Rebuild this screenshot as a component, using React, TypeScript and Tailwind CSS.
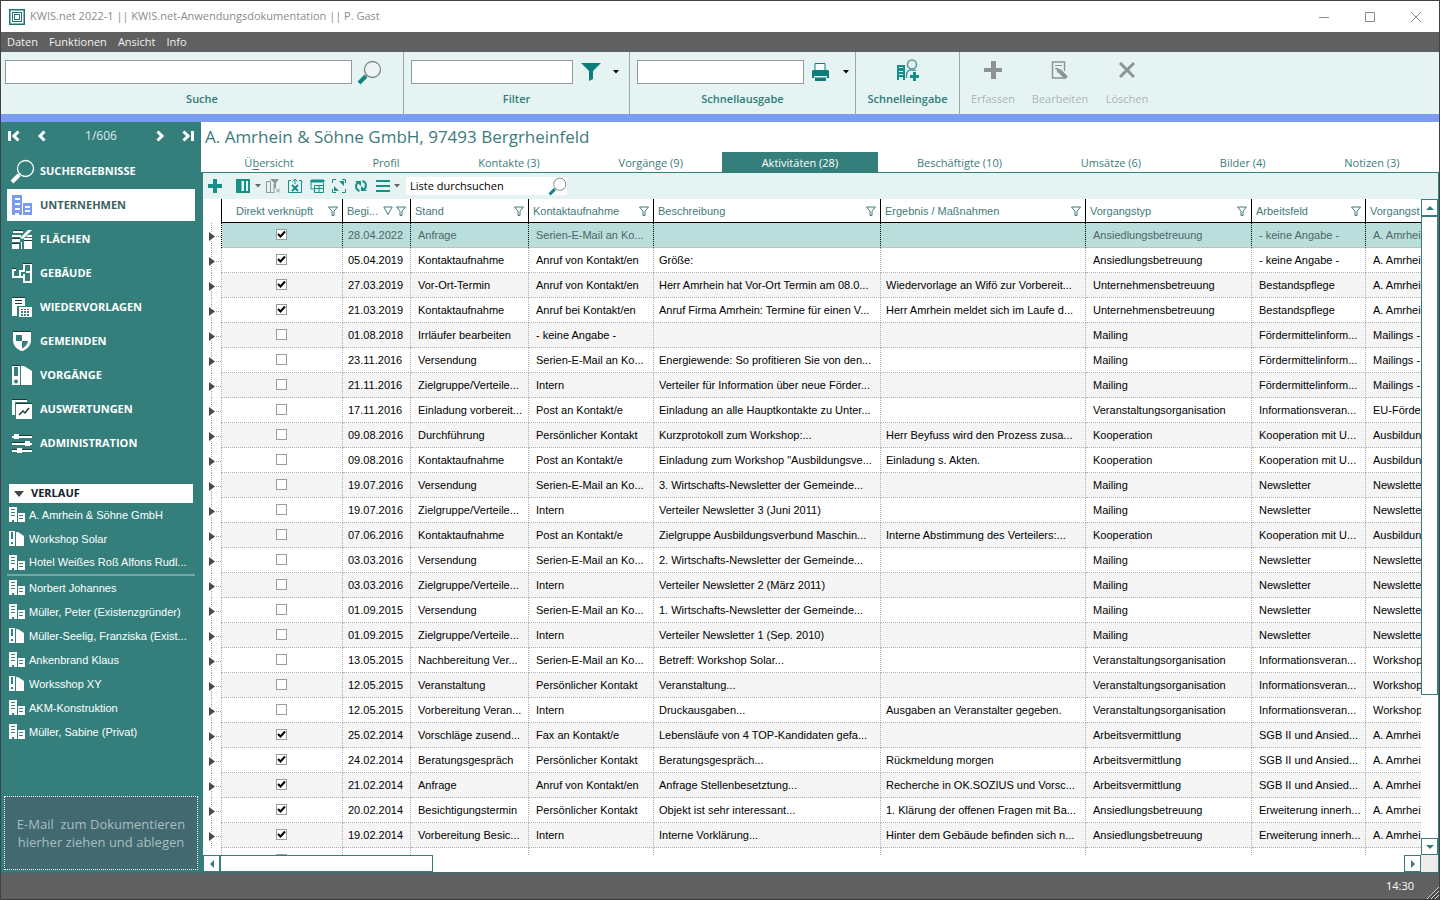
import type { ReactNode } from 'react';

// ==========================================
// DATA
// ==========================================

interface Activity {
  linked: boolean;
  date: string;
  status: string;
  contact: string;
  description: string;
  result: string;
  type: string;
  field: string;
  title: string;
}

const row = (
  linked: boolean,
  date: string,
  status: string,
  contact: string,
  description: string,
  result: string,
  type: string,
  field: string,
  title: string,
): Activity => ({ linked, date, status, contact, description, result, type, field, title });

const ACTIVITIES: Activity[] = [
  row(true, '28.04.2022', 'Anfrage', 'Serien-E-Mail an Ko...', '', '', 'Ansiedlungsbetreuung', '- keine Angabe -', 'A. Amrhei'),
  row(true, '05.04.2019', 'Kontaktaufnahme', 'Anruf von Kontakt/en', 'Größe:', '', 'Ansiedlungsbetreuung', '- keine Angabe -', 'A. Amrhei'),
  row(true, '27.03.2019', 'Vor-Ort-Termin', 'Anruf von Kontakt/en', 'Herr Amrhein hat Vor-Ort Termin am 08.0...', 'Wiedervorlage an Wifö zur Vorbereit...', 'Unternehmensbetreuung', 'Bestandspflege', 'A. Amrhei'),
  row(true, '21.03.2019', 'Kontaktaufnahme', 'Anruf bei Kontakt/en', 'Anruf Firma Amrhein: Termine für einen V...', 'Herr Amrhein meldet sich im Laufe d...', 'Unternehmensbetreuung', 'Bestandspflege', 'A. Amrhei'),
  row(false, '01.08.2018', 'Irrläufer bearbeiten', '- keine Angabe -', '', '', 'Mailing', 'Fördermittelinform...', 'Mailings -'),
  row(false, '23.11.2016', 'Versendung', 'Serien-E-Mail an Ko...', 'Energiewende: So profitieren Sie von den...', '', 'Mailing', 'Fördermittelinform...', 'Mailings -'),
  row(false, '21.11.2016', 'Zielgruppe/Verteile...', 'Intern', 'Verteiler für Information über neue Förder...', '', 'Mailing', 'Fördermittelinform...', 'Mailings -'),
  row(false, '17.11.2016', 'Einladung vorbereit...', 'Post an Kontakt/e', 'Einladung an alle Hauptkontakte zu Unter...', '', 'Veranstaltungsorganisation', 'Informationsveran...', 'EU-Förde'),
  row(false, '09.08.2016', 'Durchführung', 'Persönlicher Kontakt', 'Kurzprotokoll zum Workshop:...', 'Herr Beyfuss wird den Prozess zusa...', 'Kooperation', 'Kooperation mit U...', 'Ausbildun'),
  row(false, '09.08.2016', 'Kontaktaufnahme', 'Post an Kontakt/e', 'Einladung zum Workshop "Ausbildungsve...', 'Einladung s. Akten.', 'Kooperation', 'Kooperation mit U...', 'Ausbildun'),
  row(false, '19.07.2016', 'Versendung', 'Serien-E-Mail an Ko...', '3. Wirtschafts-Newsletter der Gemeinde...', '', 'Mailing', 'Newsletter', 'Newsletter'),
  row(false, '19.07.2016', 'Zielgruppe/Verteile...', 'Intern', 'Verteiler Newsletter 3 (Juni 2011)', '', 'Mailing', 'Newsletter', 'Newsletter'),
  row(false, '07.06.2016', 'Kontaktaufnahme', 'Post an Kontakt/e', 'Zielgruppe Ausbildungsverbund Maschin...', 'Interne Abstimmung des Verteilers:...', 'Kooperation', 'Kooperation mit U...', 'Ausbildun'),
  row(false, '03.03.2016', 'Versendung', 'Serien-E-Mail an Ko...', '2. Wirtschafts-Newsletter der Gemeinde...', '', 'Mailing', 'Newsletter', 'Newsletter'),
  row(false, '03.03.2016', 'Zielgruppe/Verteile...', 'Intern', 'Verteiler Newsletter 2 (März 2011)', '', 'Mailing', 'Newsletter', 'Newsletter'),
  row(false, '01.09.2015', 'Versendung', 'Serien-E-Mail an Ko...', '1. Wirtschafts-Newsletter der Gemeinde...', '', 'Mailing', 'Newsletter', 'Newsletter'),
  row(false, '01.09.2015', 'Zielgruppe/Verteile...', 'Intern', 'Verteiler Newsletter 1 (Sep. 2010)', '', 'Mailing', 'Newsletter', 'Newsletter'),
  row(false, '13.05.2015', 'Nachbereitung Ver...', 'Serien-E-Mail an Ko...', 'Betreff: Workshop Solar...', '', 'Veranstaltungsorganisation', 'Informationsveran...', 'Workshop'),
  row(false, '12.05.2015', 'Veranstaltung', 'Persönlicher Kontakt', 'Veranstaltung...', '', 'Veranstaltungsorganisation', 'Informationsveran...', 'Workshop'),
  row(false, '12.05.2015', 'Vorbereitung Veran...', 'Intern', 'Druckausgaben...', 'Ausgaben an Veranstalter gegeben.', 'Veranstaltungsorganisation', 'Informationsveran...', 'Workshop'),
  row(true, '25.02.2014', 'Vorschläge zusend...', 'Fax an Kontakt/e', 'Lebensläufe von 4 TOP-Kandidaten gefa...', '', 'Arbeitsvermittlung', 'SGB II und Ansied...', 'A. Amrhei'),
  row(true, '24.02.2014', 'Beratungsgespräch', 'Persönlicher Kontakt', 'Beratungsgespräch...', 'Rückmeldung morgen', 'Arbeitsvermittlung', 'SGB II und Ansied...', 'A. Amrhei'),
  row(true, '21.02.2014', 'Anfrage', 'Anruf von Kontakt/en', 'Anfrage Stellenbesetztung...', 'Recherche in OK.SOZIUS und Vorsc...', 'Arbeitsvermittlung', 'SGB II und Ansied...', 'A. Amrhei'),
  row(true, '20.02.2014', 'Besichtigungstermin', 'Persönlicher Kontakt', 'Objekt ist sehr interessant...', '1. Klärung der offenen Fragen mit Ba...', 'Ansiedlungsbetreuung', 'Erweiterung innerh...', 'A. Amrhei'),
  row(true, '19.02.2014', 'Vorbereitung Besic...', 'Intern', 'Interne Vorklärung...', 'Hinter dem Gebäude befinden sich n...', 'Ansiedlungsbetreuung', 'Erweiterung innerh...', 'A. Amrhei'),
  row(false, '', '', '', '', '', '', '', ''),
];

const COLUMNS = [
  { label: 'Stand', width: 'w-[118px]' },
  { label: 'Kontaktaufnahme', width: 'w-[125px]' },
  { label: 'Beschreibung', width: 'w-[227px]' },
  { label: 'Ergebnis / Maßnahmen', width: 'w-[205px]' },
  { label: 'Vorgangstyp', width: 'w-[166px]' },
  { label: 'Arbeitsfeld', width: 'w-[114px]' },
];

const TABS = [
  'Übersicht',
  'Profil',
  'Kontakte (3)',
  'Vorgänge (9)',
  'Aktivitäten (28)',
  'Beschäftigte (10)',
  'Umsätze (6)',
  'Bilder (4)',
  'Notizen (3)',
];

const UI = "font-['Open_Sans','Noto_Sans',sans-serif]";
const GRID = "font-['Liberation_Sans',Arial,sans-serif]";

// ==========================================
// ICONS
// ==========================================

function Magnifier({ size = 25, handle = '#0f8580', ring = '#7d8588', fill = '#eef3f8' }) {
  return (
    <svg width={size} height={size} viewBox="0 0 25 25" fill="none" aria-hidden="true">
      <path d="M2 23l7-7" stroke={handle} strokeWidth="4" />
      <path d="M8 17l2.500-2.500" stroke={ring} strokeWidth="1.500" />
      <circle cx="15.500" cy="9.500" r="8" fill={fill} stroke={ring} strokeWidth="1.300" />
    </svg>
  );
}

function Icon({ size = 20, children }: { size?: number; children: ReactNode }) {
  return (
    <svg width={size} height={size} viewBox="0 0 20 20" fill="currentColor" className="shrink-0" aria-hidden="true">
      {children}
    </svg>
  );
}

function CompanyIcon() {
  return (
    <Icon>
      <path
        fillRule="evenodd"
        d="M0 0h10v20H7v-2H3v2H0zM3 3v2h5V3zM3 8v2h5V8zM3 13v2h5v-2zM11 8h9v12h-9zM13 11v2h5v-2zM13 15v2h5v-2z"
      />
    </Icon>
  );
}

function BinderIcon() {
  return (
    <Icon>
      <path fillRule="evenodd" d="M0 0h8v20H0zM2 2v9h4V2zM4 14.500a2 2 0 100 4 2 2 0 000-4z" />
      <path d="M9 1l3 0 8 5v14H9z" />
      <path d="M0 0h8v1H0z" fill="#1d3a3a" />
    </Icon>
  );
}

// 16px variants for the history list, drawn on the pixel grid
function SmallCompanyIcon() {
  return (
    <svg width="16" height="16" viewBox="0 0 16 16" fill="#fff" className="shrink-0" aria-hidden="true">
      <path
        fillRule="evenodd"
        d="M0 0h8v15H5v-2H3v2H0zM2 2v1h4V2zM2 5v1h4V5zM2 8v1h4V8zM9 6h7v9H9zM10 8v1h4V8zM10 11v1h4v-1z"
      />
    </svg>
  );
}

function SmallBinderIcon() {
  return (
    <svg width="16" height="16" viewBox="0 0 16 16" fill="#fff" className="shrink-0" aria-hidden="true">
      <path fillRule="evenodd" d="M0 0h6v15H0zM2 1v7h2V1zM2 11v2h2v-2z" />
      <path d="M7 1h2l6 4v10H7z" />
    </svg>
  );
}

const NAV: { label: string; icon: ReactNode; active?: boolean }[] = [
  { label: 'SUCHERGEBNISSE', icon: <Magnifier handle="#fff" ring="#fff" fill="none" /> },
  { label: 'UNTERNEHMEN', icon: <CompanyIcon />, active: true },
  {
    label: 'FLÄCHEN',
    icon: (
      <Icon>
        <path d="M1 2h10v2H1zM0 6h9v2H0zM0 10h8v3H0zM0 15h7v5H0zM9 13h1v7H9zM12 12h8v8h-8zM12 9h8v2h-8zM8 9l8-8h4l-9 9zM16 6h4v2h-6z" />
        <path d="M1 1h10v1H1zM0 9h8v1H0zM0 14h7v1H0zM12 11h8v1h-8z" fill="#1d3a3a" />
      </Icon>
    ),
  },
  {
    label: 'GEBÄUDE',
    icon: (
      <Icon>
        <path d="M4 7H1v7h11v5h7V1h-7v7H8M8 7v7M12 14v-3M14 9h5" fill="none" stroke="currentColor" strokeWidth="2" />
        <path d="M11 0h9v1h-9zM0 5h4v1H0z" fill="#1d3a3a" />
      </Icon>
    ),
  },
  {
    label: 'WIEDERVORLAGEN',
    icon: (
      <Icon>
        <path fillRule="evenodd" d="M0 0h13v9H5v10H0zM3 3v1h7V3zM3 6v1h7V6z" />
        <path
          fillRule="evenodd"
          d="M7 10h13v10H7zM9 12v1h2v-1zm3 0v1h2v-1zm3 0v1h2v-1zM9 14v2h2v-2zm3 0v2h2v-2zm3 0v2h2v-2zM9 17v2h2v-2zm3 0v2h2v-2zm3 0v2h2v-2z"
        />
        <path d="M0 0h13v1H0zM3 3h7v1H3zM3 6h7v1H3z" fill="#1d3a3a" />
      </Icon>
    ),
  },
  {
    label: 'GEMEINDEN',
    icon: (
      <Icon>
        <path fillRule="evenodd" d="M1 1h18v8c0 6-4 9-9 11.500C5 18 1 15 1 9zM4 4v6h6V4zM10 10v7.500c3-1.500 5.500-4 6-7.500z" />
        <path d="M1 0h18v1H1z" fill="#1d3a3a" />
      </Icon>
    ),
  },
  { label: 'VORGÄNGE', icon: <BinderIcon /> },
  {
    label: 'AUSWERTUNGEN',
    icon: (
      <Icon>
        <path d="M0 0h15v3H3v13H0z" />
        <path d="M4 5h16v15H4z" />
        <path d="M0 0h15v1H0zM4 4h16v1H4z" fill="#1d3a3a" />
        <path d="M7 16l4-4 2 2 4-5" fill="none" stroke="#1d3a3a" strokeWidth="1.500" />
      </Icon>
    ),
  },
  {
    label: 'ADMINISTRATION',
    icon: (
      <Icon>
        <path d="M0 3h20v2H0zM0 10h20v2H0zM0 17h20v2H0z" />
        <path d="M2 1h5v5H2zM13 8h5v5h-5zM5 15h5v5H5z" />
        <path d="M7 2h13v1H7zM0 9h13v1H0zM0 16h5v1H0zM10 16h10v1H10z" fill="#1d3a3a" />
      </Icon>
    ),
  },
];

const HISTORY: { label: string; binder?: boolean }[] = [
  { label: 'A. Amrhein & Söhne GmbH' },
  { label: 'Workshop Solar', binder: true },
  { label: 'Hotel Weißes Roß Alfons Rudl...' },
  { label: 'Norbert Johannes' },
  { label: 'Müller, Peter (Existenzgründer)' },
  { label: 'Müller-Seelig, Franziska (Exist...', binder: true },
  { label: 'Ankenbrand Klaus' },
  { label: 'Worksshop XY', binder: true },
  { label: 'AKM-Konstruktion' },
  { label: 'Müller, Sabine (Privat)' },
];

function Caret() {
  return (
    <svg width="6" height="4" viewBox="0 0 6 4" aria-hidden="true">
      <path d="M0 0h6L3 3.500z" fill="currentColor" />
    </svg>
  );
}

function FilterGlyph() {
  return (
    <svg width="10" height="10" viewBox="0 0 10 10" fill="none" stroke="#3f7b7b" className="shrink-0" aria-hidden="true">
      <path d="M.5 1h9L6 5.200V9.500H4V5.200z" />
    </svg>
  );
}

// ==========================================
// HEADER BARS
// ==========================================

function TitleBar() {
  return (
    <header className="flex h-[31px] shrink-0 items-center bg-white pl-2 pr-[17px] text-[11px] text-[#8b8b8b]">
      <svg width="16" height="16" viewBox="0 0 16 16" fill="none" stroke="#1f7370" aria-hidden="true">
        <rect x=".75" y=".75" width="14.500" height="14.500" strokeWidth="1.500" />
        <rect x="3.500" y="3.500" width="9" height="9" />
        <rect x="5.500" y="5.500" width="5" height="5" />
      </svg>
      <h1 className="ml-[5px] whitespace-nowrap">
        KWIS.net 2022-1 || KWIS.net-Anwendungsdokumentation || P. Gast
      </h1>
      <div className="ml-auto flex items-center gap-[34px]">
        <button type="button" aria-label="Minimieren">
          <svg width="12" height="12" viewBox="0 0 12 12" stroke="#8c8c8c"><path d="M1 6.500h10" /></svg>
        </button>
        <button type="button" aria-label="Maximieren">
          <svg width="12" height="12" viewBox="0 0 12 12" fill="none" stroke="#8c8c8c"><path d="M1.500 1.500h9v9h-9z" /></svg>
        </button>
        <button type="button" aria-label="Schließen">
          <svg width="12" height="12" viewBox="0 0 12 12" stroke="#8c8c8c"><path d="M1 1l10 10M11 1L1 11" /></svg>
        </button>
      </div>
    </header>
  );
}

function SearchGroup({
  id,
  label,
  width,
  pad,
  children,
}: {
  id: string;
  label: string;
  width: string;
  pad: string;
  children: ReactNode;
}) {
  return (
    <div className={`flex flex-col border-r border-[#9aa8a8] pt-2 ${width}`}>
      <div className={`flex h-6 items-center ${pad}`}>
        <input id={id} className="h-6 min-w-0 flex-1 border border-[#8f9a9a] bg-white px-1 text-[#222] outline-none" />
        {children}
      </div>
      <label htmlFor={id} className="mt-[7px] text-center leading-4">{label}</label>
    </div>
  );
}

function Ribbon() {
  return (
    <div className="flex h-[62px] shrink-0 bg-[#e5f4f3] text-[11px] font-semibold text-[#2f7c79]">
      <SearchGroup id="suche" label="Suche" width="w-[403px]" pad="pl-1 pr-[21px]">
        <button type="button" aria-label="Suchen" className="ml-[5px]"><Magnifier /></button>
      </SearchGroup>
      <SearchGroup id="filter" label="Filter" width="w-[226px]" pad="pl-[7px] pr-[10px]">
        <button type="button" aria-label="Filtern" className="ml-2">
          <svg width="20" height="20" viewBox="0 0 20 20" fill="#0d7f7b"><path d="M0 1h20l-8 8v8l-4 2V9z" /></svg>
        </button>
        <button type="button" aria-label="Filter wählen" className="ml-[12px] text-black"><Caret /></button>
      </SearchGroup>
      <SearchGroup id="ausgabe" label="Schnellausgabe" width="w-[226px]" pad="pl-[7px] pr-[6px]">
        <button type="button" aria-label="Drucken" className="ml-[7px]">
          <svg width="19" height="20" viewBox="0 0 19 20" fill="#0d7f7b">
            <path d="M4 1.500h10V9H4z" fill="#f4fbfa" stroke="#0d7f7b" />
            <path d="M2 8h15l1 1v7h-3v-2H4v2H1V9zM4 15h11v4H4z" />
            <path d="M3 14h13v1.500H3z" fill="#e5f4f3" />
          </svg>
        </button>
        <button type="button" aria-label="Ausgabe wählen" className="ml-[13px] text-black"><Caret /></button>
      </SearchGroup>
      <button type="button" className="flex w-[104px] flex-col items-center border-r border-[#9aa8a8] pt-[7px]">
        <svg width="22" height="22" viewBox="0 0 22 22" fill="#14908a" aria-hidden="true">
          <path fillRule="evenodd" d="M0 6h8v15H6v-3H2v3H0zM2 8v1h4V8zm0 4v1h4v-1zM2 15v1h4v-1z" />
          <path d="M9.500 19v-3c0-3 2-5 5.500-5s5 1.500 5.500 4" fill="none" stroke="#4b9c98" strokeWidth="1.500" />
          <circle cx="15" cy="5.500" r="4.500" fill="none" stroke="#4b9c98" strokeWidth="1.500" />
          <path d="M12 12h10v10H12z" fill="#e5f4f3" />
          <path d="M16 13h3v3h3v3h-3v3h-3v-3h-3v-3h3z" />
        </svg>
        <span className="mt-[10px] leading-4">Schnelleingabe</span>
      </button>
      <div className="flex pl-1 font-normal text-[#aab5b5]">
        <button type="button" disabled className="flex w-[58px] flex-col items-center pt-[9px]">
          <svg width="18" height="18" viewBox="0 0 18 18" fill="#8e9393"><path d="M7 0h5v7h6v4h-6v7H7v-7H0V7h7z" /></svg>
          <span className="mt-3 leading-4">Erfassen</span>
        </button>
        <button type="button" disabled className="flex w-[76px] flex-col items-center pt-[9px]">
          <svg width="18" height="18" viewBox="0 0 18 18" fill="none" stroke="#8e9393">
            <path d="M13.500 10V1h-12v16h12" strokeWidth="1.500" />
            <path d="M4 4.500h7M4 7.500h3" />
            <path d="M8.500 10l7 7" strokeWidth="4" />
            <path d="M5 7l5 1.500L6.500 12z" fill="#8e9393" stroke="none" />
          </svg>
          <span className="mt-3 leading-4">Bearbeiten</span>
        </button>
        <button type="button" disabled className="flex w-[58px] flex-col items-center pt-[10px]">
          <svg width="16" height="16" viewBox="0 0 16 16" stroke="#8e9393" strokeWidth="3"><path d="M1 1l14 14M15 1L1 15" /></svg>
          <span className="mt-[13px] leading-4">Löschen</span>
        </button>
      </div>
    </div>
  );
}

// ==========================================
// SIDEBAR
// ==========================================

function Chevron({ d, label }: { d: string; label: string }) {
  return (
    <button type="button" aria-label={label}>
      <svg width="12" height="12" viewBox="0 0 12 12" fill="none" stroke="#fff" strokeWidth="3"><path d={d} /></svg>
    </button>
  );
}

function Sidebar() {
  return (
    <aside className="flex w-[200px] shrink-0 flex-col bg-[#347f7c] text-white">
      <div className="flex h-7 items-center justify-between px-[7px] text-[12px] text-[#d9ecea]">
        <div className="flex gap-4">
          <Chevron label="Erster" d="M1.500 1v10M10.500 1.500L6 6l4.500 4.500" />
          <Chevron label="Zurück" d="M8.500 1.500L4 6l4.500 4.500" />
        </div>
        <span>1/606</span>
        <div className="flex gap-4">
          <Chevron label="Weiter" d="M3.500 1.500L8 6l-4.500 4.500" />
          <Chevron label="Letzter" d="M10.500 1v10M1.500 1.500L6 6l-4.500 4.500" />
        </div>
      </div>

      <nav className="mt-[5px] flex flex-col gap-[2px] px-[6px]">
        {NAV.map((n) => (
          <a
            key={n.label}
            href="#"
            className={`flex h-8 items-center text-[11px] font-bold ${n.active ? 'bg-white text-[#3d6264]' : 'text-white'}`}
          >
            <span className={`flex w-[33px] justify-start pl-[5px] ${n.active ? 'text-[#7b9bf0]' : ''}`}>
              {n.label === 'SUCHERGEBNISSE' ? <span className="-ml-[2px]">{n.icon}</span> : n.icon}
            </span>
            {n.label}
          </a>
        ))}
      </nav>

      <button
        type="button"
        className="mx-2 mt-[25px] flex h-[19px] shrink-0 items-center gap-[7px] bg-white pl-[5px] text-[11px] font-bold text-[#0f2030]"
      >
        <svg width="10" height="6" viewBox="0 0 10 6" fill="#444"><path d="M0 0h10L5 6z" /></svg>
        VERLAUF
      </button>
      <ul className={`text-[11px] ${GRID}`}>
        {HISTORY.map((h, i) => (
          <li key={h.label} className={i === 2 ? 'mx-[6px] h-[25px] border-b-2 border-[#74a9a7] px-[2px]' : 'h-6 px-2'}>
            <a href="#" className="flex h-full items-center gap-1 whitespace-nowrap">
              {h.binder ? <SmallBinderIcon /> : <SmallCompanyIcon />}
              {h.label}
            </a>
          </li>
        ))}
      </ul>

      <div className="mx-[3px] mb-[2px] mt-auto flex h-[74px] flex-col items-center justify-center border border-dotted border-white bg-[#42696f] text-[13px] leading-[18px] text-[#a9bfc1]">
        <p className="whitespace-pre">E-Mail  zum Dokumentieren</p>
        <p>hierher ziehen und ablegen</p>
      </div>
    </aside>
  );
}

// ==========================================
// ACTIVITY LIST
// ==========================================

function ToolButton({ label, children }: { label: string; children: ReactNode }) {
  return (
    <button type="button" aria-label={label} className="flex w-[22px] justify-center">
      <svg width="16" height="16" viewBox="0 0 16 16" fill="none" stroke="#179088" aria-hidden="true">
        {children}
      </svg>
    </button>
  );
}

function ListToolbar() {
  return (
    <div className="flex h-[26px] shrink-0 items-center bg-[#e5f4f3] pl-[1px] text-[11px] text-[#666]">
      <ToolButton label="Neu"><path d="M8 1v14M1 8h14" strokeWidth="4" /></ToolButton>
      <span className="w-[6px]" />
      <ToolButton label="Spalten">
        <path d="M2 2h12v12H2z" strokeWidth="2" />
        <path d="M2 2h4v12H2z" fill="#179088" />
        <path d="M10 2v12" strokeWidth="2" />
      </ToolButton>
      <button type="button" aria-label="Spalten wählen" className="flex w-[8px] justify-center"><Caret /></button>
      <ToolButton label="Filter löschen">
        <g stroke="#8e9a9a">
          <path d="M1.500 3.500h4v11h-4zM6 14.500h3V6" />
          <path d="M5 1h9L11 5v5H9V5z" fill="#8e9a9a" stroke="none" />
          <path d="M11 10.500l4 4M15 10.500l-4 4" />
        </g>
      </ToolButton>
      <ToolButton label="Excel-Export">
        <path d="M4 2.500H1.500v12h13v-12H12" />
        <path d="M5 7l6 6M11 7l-6 6" strokeWidth="2" />
        <path d="M8 6V1M5.500 3.500L8 1l2.500 2.500" />
      </ToolButton>
      <ToolButton label="Layout">
        <path d="M2 2h13v2H2z" fill="#179088" />
        <path d="M2 2v9h3M14.500 5v9.500h-9v-7h9M10 7.500v7M5.500 10.500h9" />
      </ToolButton>
      <ToolButton label="Vollbild">
        <path d="M1.500 5V1.500H5M11 1.500h3.500V5M14.500 11v3.500H11M5 14.500H1.500V11" />
        <path d="M13 3v5L8 3zM3 13V8l5 5z" fill="#179088" stroke="none" />
      </ToolButton>
      <ToolButton label="Aktualisieren">
        <path d="M6.500 13C2.500 12 2 6.500 5 4.500M9.500 3c4 1 4.500 6.500 1.500 8.500" strokeWidth="2" />
        <path d="M2 3h6v5zM14 13H8V8z" fill="#179088" stroke="none" />
      </ToolButton>
      <ToolButton label="Menü"><path d="M1 3h14M1 8h14M1 13h14" strokeWidth="2" /></ToolButton>
      <button type="button" aria-label="Menü öffnen" className="flex w-[6px] justify-center"><Caret /></button>
      <div className="ml-[6px] flex h-[18px] w-[161px] items-center bg-white">
        <input
          aria-label="Liste durchsuchen"
          placeholder="Liste durchsuchen"
          className="min-w-0 flex-1 bg-transparent pl-1 text-[11px] text-black outline-none placeholder:text-black"
        />
        <button type="button" aria-label="Liste suchen"><Magnifier size={19} fill="#fff" /></button>
      </div>
    </div>
  );
}

function LinkedCheckbox({ checked, label }: { checked: boolean; label: string }) {
  return (
    <label className="mx-auto grid size-[11px] place-items-center">
      <input
        type="checkbox"
        defaultChecked={checked}
        aria-label={label}
        className="peer col-start-1 row-start-1 size-[11px] appearance-none border border-[#9c9c9c] bg-white"
      />
      <svg width="9" height="9" viewBox="0 0 9 9" fill="none" stroke="#000" strokeWidth="2" className="pointer-events-none invisible col-start-1 row-start-1 peer-checked:visible">
        <path d="M1 4l2.500 2.500L8 1.500" />
      </svg>
    </label>
  );
}

function ActivityRow({ item, idx }: { item: Activity; idx: number }) {
  const selected = idx === 0;
  const cell = [
    'h-[25px] overflow-hidden whitespace-nowrap border-b border-r border-dotted border-b-[#b0b0b0] p-0',
    selected ? 'border-r-black bg-[#b9dedc] text-[#4f6666]' : 'border-r-[#b0b0b0]',
    !selected && idx % 2 === 0 ? 'bg-[#f5f5f5]' : '',
  ].join(' ');

  return (
    <tr>
      <td className={`h-[25px] border-r border-dotted p-0 ${selected ? 'border-black' : 'border-[#b0b0b0]'}`}>
        {item.date && (
          <button type="button" aria-label={`Aktivität ${item.date} öffnen`} className="block">
            <svg width="18" height="25" viewBox="0 0 18 25">
              <path d="M8.500 0v9M8.500 18v7M13 13.500h5" stroke="#a0a0a0" strokeDasharray="1 1" />
              <path d="M6 9v9l6-4.500z" fill="#4a4a4a" />
            </svg>
          </button>
        )}
      </td>
      <td className={`${cell} pb-[2px] pr-[2px]`}>
        <LinkedCheckbox checked={item.linked} label={`Direkt verknüpft ${item.date}`} />
      </td>
      <td className={`${cell} pl-[5px]`}>{item.date}</td>
      <td className={`${cell} pl-[7px]`}>{item.status}</td>
      <td className={`${cell} pl-[7px]`}>{item.contact}</td>
      <td className={`${cell} pl-[5px]`}>{item.description}</td>
      <td className={`${cell} pl-[5px]`}>{item.result}</td>
      <td className={`${cell} pl-[7px]`}>{item.type}</td>
      <td className={`${cell} pl-[7px]`}>{item.field}</td>
      <td className={`${cell} border-r-0 pl-[7px]`}>{item.title}</td>
    </tr>
  );
}

function ActivityTable() {
  const th = 'h-6 overflow-hidden whitespace-nowrap border-b border-r border-black p-0 pl-1 text-left font-normal';
  return (
    <table className={`w-full table-fixed border-separate border-spacing-0 text-[11px] leading-[14px] text-black ${GRID}`}>
      <thead className="text-[#3f7b7b]">
        <tr>
          <th className="w-[19px] border-r border-black p-0" aria-label="Öffnen" />
          <th className={`${th} w-[121px]`}>
            <div className="flex items-center justify-between pl-[10px] pr-1">
              Direkt verknüpft <FilterGlyph />
            </div>
          </th>
          <th className={`${th} w-[68px]`}>
            <div className="flex items-center gap-[3px] pr-1">
              <span className="mr-auto">Begi...</span>
              <svg width="10" height="10" viewBox="0 0 10 10" fill="none" stroke="#3f7b7b"><path d="M.8 1h8.400L5 8.500z" /></svg>
              <FilterGlyph />
            </div>
          </th>
          {COLUMNS.map((c) => (
            <th key={c.label} className={`${th} ${c.width}`}>
              <div className="flex items-center justify-between pr-1">
                {c.label} <FilterGlyph />
              </div>
            </th>
          ))}
          <th className={`${th} border-r-0`}>Vorgangst</th>
        </tr>
      </thead>
      <tbody>
        {ACTIVITIES.map((a, i) => (
          <ActivityRow key={i} item={a} idx={i} />
        ))}
      </tbody>
    </table>
  );
}

function ScrollButton({ label, d }: { label: string; d: string }) {
  return (
    <button type="button" aria-label={label} className="grid size-[17px] shrink-0 place-items-center border border-[#347f7c] bg-white">
      <svg width="8" height="8" viewBox="0 0 8 8" fill="#347f7c"><path d={d} /></svg>
    </button>
  );
}

function Content() {
  return (
    <main className="flex min-w-0 flex-1 flex-col bg-white text-[#3c7b7c]">
      <h2 className="h-[30px] shrink-0 pl-1 text-[17px] leading-[30px]">A. Amrhein &amp; Söhne GmbH, 97493 Bergrheinfeld</h2>
      <div role="tablist" className="flex h-[21px] shrink-0 border-b border-[#347f7c] pl-1 text-[11px]">
        {TABS.map((t) => (
          <button
            key={t}
            type="button"
            role="tab"
            aria-selected={t.startsWith('Aktivitäten')}
            className={`flex-auto whitespace-nowrap pt-[2px] ${t.startsWith('Aktivitäten') ? 'bg-[#347f7c] text-white' : ''}`}
          >
            {t === 'Übersicht' ? <>Ü<u className="underline-offset-2">b</u>ersicht</> : t}
          </button>
        ))}
      </div>
      <div className="flex min-h-0 flex-1 flex-col border-l-2 border-r border-[#347f7c]">
        <ListToolbar />
        <div className="flex min-h-0 flex-1">
          <div className="min-w-0 flex-1 overflow-hidden">
            <ActivityTable />
          </div>
          <div className="flex w-[17px] shrink-0 flex-col">
            <ScrollButton label="Nach oben" d="M0 6h8L4 2z" />
            <div className="flex-1">
              <div className="h-[77%] border border-[#347f7c] bg-white" />
            </div>
            <ScrollButton label="Nach unten" d="M0 2h8L4 6z" />
          </div>
        </div>
        <div className="flex h-[17px] shrink-0">
          <ScrollButton label="Nach links" d="M6 0v8L2 4z" />
          <div className="flex-1">
            <div className="h-full w-[18%] border border-[#347f7c] bg-white" />
          </div>
          <ScrollButton label="Nach rechts" d="M2 0v8l4-4z" />
          <div className="w-[17px] bg-[#ececec]" />
        </div>
      </div>
    </main>
  );
}

export default function App() {
  return (
    <div className={`flex h-screen flex-col overflow-hidden border-x border-t border-[#3d4347] ${UI}`}>
      <TitleBar />
      <nav className="flex h-5 shrink-0 items-center gap-[11px] bg-[#606060] pl-[6px] text-[11px] text-[#f0f0f0]">
        <a href="#">Daten</a>
        <a href="#">Funktionen</a>
        <a href="#">Ansicht</a>
        <a href="#">Info</a>
      </nav>
      <Ribbon />
      <div className="h-2 shrink-0 bg-[#7a9df2]" />
      <div className="flex min-h-0 flex-1">
        <Sidebar />
        <Content />
      </div>
      <footer className="flex h-7 shrink-0 items-center justify-end border-b border-t-2 border-b-[#3a3a3a] border-t-[#4c6b69] bg-[#606060] text-[11px] text-white">
        <time className="mr-3">14:30</time>
        <svg width="13" height="13" viewBox="0 0 13 13" className="self-end" aria-hidden="true">
          <path d="M1 13L13 1M5 13l8-8M9 13l4-4" stroke="#d8d8d8" />
          <path d="M2.500 13L13 2.500M6.500 13L13 6.500M10.500 13l2.500-2.500" stroke="#222" />
        </svg>
      </footer>
    </div>
  );
}
